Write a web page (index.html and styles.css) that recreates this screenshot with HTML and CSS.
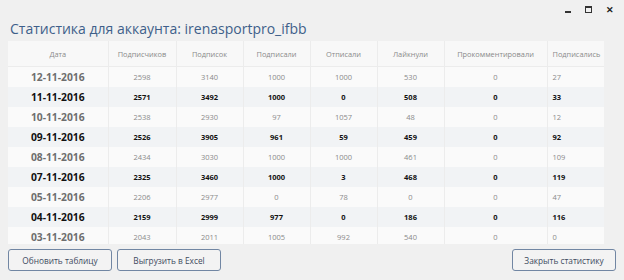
FILE: index.html
```html
<!DOCTYPE html>
<html>
<head>
<meta charset="utf-8">
<link rel="stylesheet" href="styles.css">
</head>
<body>
<div class="window">
  <div class="titlebar">
    <span class="ctl ctl-min"></span>
    <span class="ctl ctl-max"></span>
    <span class="ctl ctl-close">✕</span>
  </div>
  <h1 class="title">Статистика для аккаунта: irenasportpro_ifbb</h1>
  <div class="grid-wrap">
    <table class="grid">
      <colgroup>
        <col class="c1"><col class="c2"><col class="c3"><col class="c4"><col class="c5"><col class="c6"><col class="c7"><col class="c8">
      </colgroup>
      <thead>
        <tr><th>Дата</th><th>Подписчиков</th><th>Подписок</th><th>Подписали</th><th>Отписали</th><th>Лайкнули</th><th>Прокомментировали</th><th class="left">Подписались</th></tr>
      </thead>
      <tbody>
        <tr class="odd"><td class="date">12-11-2016</td><td>2598</td><td>3140</td><td>1000</td><td>1000</td><td>530</td><td>0</td><td class="left">27</td></tr>
        <tr class="even"><td class="date">11-11-2016</td><td>2571</td><td>3492</td><td>1000</td><td>0</td><td>508</td><td>0</td><td class="left">33</td></tr>
        <tr class="odd"><td class="date">10-11-2016</td><td>2538</td><td>2930</td><td>97</td><td>1057</td><td>48</td><td>0</td><td class="left">12</td></tr>
        <tr class="even"><td class="date">09-11-2016</td><td>2526</td><td>3905</td><td>961</td><td>59</td><td>459</td><td>0</td><td class="left">92</td></tr>
        <tr class="odd"><td class="date">08-11-2016</td><td>2434</td><td>3030</td><td>1000</td><td>1000</td><td>461</td><td>0</td><td class="left">109</td></tr>
        <tr class="even"><td class="date">07-11-2016</td><td>2325</td><td>3460</td><td>1000</td><td>3</td><td>468</td><td>0</td><td class="left">119</td></tr>
        <tr class="odd"><td class="date">05-11-2016</td><td>2206</td><td>2977</td><td>0</td><td>78</td><td>0</td><td>0</td><td class="left">47</td></tr>
        <tr class="even"><td class="date">04-11-2016</td><td>2159</td><td>2999</td><td>977</td><td>0</td><td>186</td><td>0</td><td class="left">116</td></tr>
        <tr class="odd"><td class="date">03-11-2016</td><td>2043</td><td>2011</td><td>1005</td><td>992</td><td>540</td><td>0</td><td class="left">0</td></tr>
      </tbody>
    </table>
  </div>
  <div class="actions">
    <button class="btn">Обновить таблицу</button>
    <button class="btn">Выгрузить в Excel</button>
    <span class="spacer"></span>
    <button class="btn">Закрыть статистику</button>
  </div>
</div>
</body>
</html>
```
FILE: styles.css
```css
html, body {
  margin: 0;
  padding: 0;
  background: #f0f0f0;
}
.window {
  width: 624px;
  height: 280px;
  background: #f0f0f0;
  font-family: "Open Sans", "Noto Sans", sans-serif;
  display: flex;
  flex-direction: column;
  overflow: hidden;
}
.titlebar {
  height: 18px;
  display: flex;
  justify-content: flex-end;
  align-items: center;
  padding-right: 4px;
}
.ctl {
  width: 21px;
  height: 18px;
  display: flex;
  align-items: center;
  justify-content: center;
  color: #222;
}
.ctl-min::after {
  content: "";
  width: 6px;
  height: 2px;
  background: #333;
  margin-top: 6px;
}
.ctl-max::after {
  content: "";
  width: 5px;
  height: 4px;
  border: 1px solid #333;
  border-top-width: 2px;
}
.ctl-close {
  font-size: 9px;
  font-weight: bold;
}
.title {
  margin: 0 0 0 10px;
  font-size: 14px;
  font-weight: normal;
  color: #3e5f8a;
  height: 23px;
  line-height: 22px;
}
.grid-wrap {
  margin-left: 8px;
  width: 596px;
  height: 203px;
  overflow: hidden;
  background: #fafafa;
}
.grid {
  border-collapse: collapse;
  table-layout: fixed;
  width: 596px;
}
.c1 { width: 100px; }
.c2 { width: 68px; }
.c3 { width: 67px; }
.c4 { width: 67px; }
.c5 { width: 67px; }
.c6 { width: 67px; }
.c7 { width: 103px; }
.c8 { width: 57px; }
.grid th {
  height: 25px;
  font-size: 7.4px;
  font-weight: normal;
  color: #8a8a8a;
  background: #f8f8f8;
  border-right: 1px solid #ececec;
  border-bottom: 1px solid #ececec;
  text-align: center;
  padding: 0;
  white-space: nowrap;
}
.grid td {
  height: 20px;
  padding: 0;
  font-size: 7.5px;
  text-align: center;
  border-right: 1px solid #ececec;
  white-space: nowrap;
}
.grid th:last-child, .grid td:last-child { border-right: none; }
.grid .left { text-align: left; padding-left: 5px; }
.odd td { background: #fafafa; color: #8a8a8a; }
.even td { background: #f1f3f5; color: #111; font-weight: bold; }
.grid td.date {
  font-size: 10.3px;
  font-weight: bold;
}
.odd td.date { color: #6e6e6e; }
.even td.date { color: #111; }
.actions {
  display: flex;
  padding: 5px 8px 0 8px;
  gap: 5px;
}
.spacer { flex: 1; }
.btn {
  width: 104px;
  height: 22px;
  border: 1px solid #7186a3;
  border-radius: 3px;
  background: #f3f3f3;
  font-family: "Open Sans", "Noto Sans", sans-serif;
  font-size: 8.3px;
  color: #3d4a5e;
  padding: 0;
}
```
